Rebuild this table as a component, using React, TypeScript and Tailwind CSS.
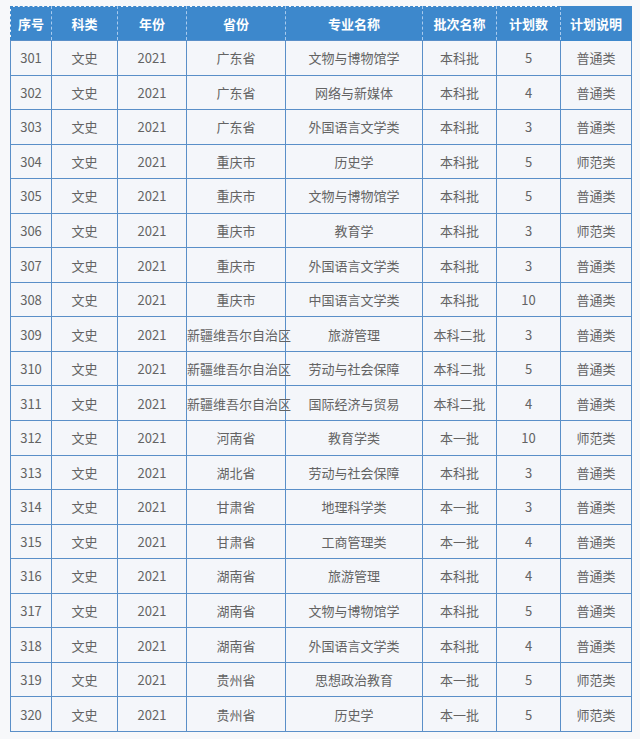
const rows: [string, string, string, string, string, string, string, string][] = [
  ["301", "文史", "2021", "广东省", "文物与博物馆学", "本科批", "5", "普通类"],
  ["302", "文史", "2021", "广东省", "网络与新媒体", "本科批", "4", "普通类"],
  ["303", "文史", "2021", "广东省", "外国语言文学类", "本科批", "3", "普通类"],
  ["304", "文史", "2021", "重庆市", "历史学", "本科批", "5", "师范类"],
  ["305", "文史", "2021", "重庆市", "文物与博物馆学", "本科批", "5", "普通类"],
  ["306", "文史", "2021", "重庆市", "教育学", "本科批", "3", "师范类"],
  ["307", "文史", "2021", "重庆市", "外国语言文学类", "本科批", "3", "普通类"],
  ["308", "文史", "2021", "重庆市", "中国语言文学类", "本科批", "10", "普通类"],
  ["309", "文史", "2021", "新疆维吾尔自治区", "旅游管理", "本科二批", "3", "普通类"],
  ["310", "文史", "2021", "新疆维吾尔自治区", "劳动与社会保障", "本科二批", "5", "普通类"],
  ["311", "文史", "2021", "新疆维吾尔自治区", "国际经济与贸易", "本科二批", "4", "普通类"],
  ["312", "文史", "2021", "河南省", "教育学类", "本一批", "10", "师范类"],
  ["313", "文史", "2021", "湖北省", "劳动与社会保障", "本科批", "3", "普通类"],
  ["314", "文史", "2021", "甘肃省", "地理科学类", "本一批", "3", "普通类"],
  ["315", "文史", "2021", "甘肃省", "工商管理类", "本一批", "4", "普通类"],
  ["316", "文史", "2021", "湖南省", "旅游管理", "本科批", "4", "普通类"],
  ["317", "文史", "2021", "湖南省", "文物与博物馆学", "本科批", "5", "普通类"],
  ["318", "文史", "2021", "湖南省", "外国语言文学类", "本科批", "4", "普通类"],
  ["319", "文史", "2021", "贵州省", "思想政治教育", "本一批", "5", "师范类"],
  ["320", "文史", "2021", "贵州省", "历史学", "本一批", "5", "师范类"],
];

const headers = ["序号", "科类", "年份", "省份", "专业名称", "批次名称", "计划数", "计划说明"];
const widths = ["w-[41px]", "w-[66px]", "w-[69px]", "w-[99px]", "w-[137px]", "w-[74px]", "w-[64px]", "w-[71px]"];

export default function App() {
  return (
    <div
      className="w-[640px] h-[739px] bg-[#f7f8fa] pt-[6px] pl-[10px]"
      style={{ fontFamily: '"Noto Sans CJK SC", "Noto Sans", sans-serif' }}
    >
      <table className="table-fixed border-collapse w-[622px] text-[13px] text-[#636363]">
        <colgroup>
          {widths.map((w, i) => (
            <col key={i} className={w} />
          ))}
        </colgroup>
        <thead>
          <tr className="h-[34px] bg-[#3d88cc]">
            {headers.map((h, i) => (
              <th
                key={h}
                className={
                  "text-white font-bold text-center p-0 border-y border-[#3d88cc] " +
                  (i === 0 ? "border-l border-l-[#3d88cc] " : "") +
                  (i === headers.length - 1
                    ? "border-r border-r-[#3d88cc]"
                    : "border-r border-r-[#a9cbee] border-dashed")
                }
              >
                {h}
              </th>
            ))}
          </tr>
        </thead>
        <tbody className="bg-[#f4f6fa]">
          {rows.map((r) => (
            <tr key={r[0]} className="h-[34.55px]">
              {r.map((c, i) => (
                <td
                  key={i}
                  className="border border-[#5a8fc8] text-center p-0 whitespace-nowrap leading-none"
                >
                  {c}
                </td>
              ))}
            </tr>
          ))}
        </tbody>
      </table>
    </div>
  );
}
